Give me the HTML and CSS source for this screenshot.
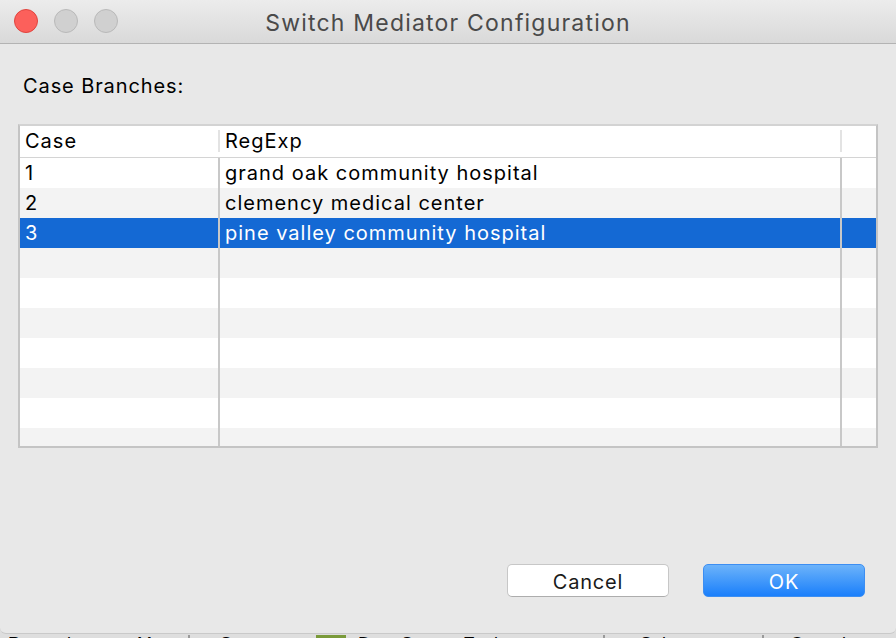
FILE: index.html
```html
<!DOCTYPE html>
<html>
<head>
<meta charset="utf-8">
<link rel="stylesheet" href="styles.css">
</head>
<body>
<div class="window">
  <div class="titlebar">
    <div class="lights">
      <span class="light close"></span>
      <span class="light"></span>
      <span class="light"></span>
    </div>
    <div class="title">Switch Mediator Configuration</div>
    <div></div>
  </div>
  <div class="content">
    <div class="label">Case Branches:</div>
    <div class="table">
      <div class="thead">
        <div class="hcell c1">Case</div>
        <div class="hcell c2">RegExp</div>
        <div class="hcell c3"></div>
      </div>
      <div class="tbody">
        <div class="row"><div class="cell c1">1</div><div class="cell c2">grand oak community hospital</div><div class="cell c3"></div></div>
        <div class="row alt"><div class="cell c1">2</div><div class="cell c2">clemency medical center</div><div class="cell c3"></div></div>
        <div class="row sel"><div class="cell c1">3</div><div class="cell c2">pine valley community hospital</div><div class="cell c3"></div></div>
        <div class="row alt"><div class="cell c1"></div><div class="cell c2"></div><div class="cell c3"></div></div>
        <div class="row"><div class="cell c1"></div><div class="cell c2"></div><div class="cell c3"></div></div>
        <div class="row alt"><div class="cell c1"></div><div class="cell c2"></div><div class="cell c3"></div></div>
        <div class="row"><div class="cell c1"></div><div class="cell c2"></div><div class="cell c3"></div></div>
        <div class="row alt"><div class="cell c1"></div><div class="cell c2"></div><div class="cell c3"></div></div>
        <div class="row"><div class="cell c1"></div><div class="cell c2"></div><div class="cell c3"></div></div>
        <div class="row alt"><div class="cell c1"></div><div class="cell c2"></div><div class="cell c3"></div></div>
      </div>
    </div>
    <div class="buttons">
      <button class="btn cancel">Cancel</button>
      <button class="btn ok">OK</button>
    </div>
  </div>
</div>
<div class="underlay">
  <span class="u1">Properties</span><span class="u2">M</span><span class="sep s1"></span>
  <span class="u3">Servers</span><span class="green"></span>
  <span class="u4">Data Source Explorer</span><span class="sep s2"></span>
  <span class="u5">Snippets</span><span class="sep s3"></span><span class="u6">Console</span>
</div>
</body>
</html>
```

FILE: styles.css
```css
* { box-sizing: border-box; }
html, body { margin: 0; padding: 0; }
body {
  width: 896px;
  height: 638px;
  overflow: hidden;
  background: #dedede;
  font-family: Inter, "Liberation Sans", sans-serif;
  color: #000;
}
.window {
  width: 896px;
  height: 634px;
  background: #e8e8e8;
  border-radius: 0 0 6px 6px;
  border-bottom: 1px solid #c9c9c9;
  display: flex;
  flex-direction: column;
  overflow: hidden;
}
.titlebar {
  height: 44px;
  flex: none;
  background: linear-gradient(#ececec, #d9d9d9);
  border-bottom: 1px solid #b3b3b3;
  display: grid;
  grid-template-columns: 1fr auto 1fr;
  align-items: center;
}
.lights {
  display: flex;
  gap: 16px;
  padding-left: 14px;
  padding-bottom: 1px;
}
.light {
  width: 24px;
  height: 24px;
  border-radius: 50%;
  background: #d0d0d0;
  border: 1px solid #b9b9b9;
}
.light.close {
  background: #fc605b;
  border-color: #e0443e;
}
.title {
  font-size: 23px;
  color: #4a4a4a;
  letter-spacing: 1.2px;
  padding-top: 3px;
}
.content {
  padding: 0 18px;
  display: flex;
  flex-direction: column;
}
.label {
  margin-top: 30px;
  height: 24px;
  line-height: 24px;
  font-size: 20px;
  letter-spacing: 0.9px;
  padding-left: 5px;
}
.table {
  margin-top: 26px;
  height: 324px;
  border: 2px solid #c4c4c4;
  border-top-color: #d3d3d3;
  background: #fff;
  overflow: hidden;
}
.thead {
  display: flex;
  height: 32px;
  border-bottom: 1px solid #d4d4d4;
  background: #fff;
}
.hcell {
  position: relative;
  font-size: 20px;
  letter-spacing: 1px;
  line-height: 31px;
  padding-left: 5px;
}
.hcell.c1::after, .hcell.c2::after {
  content: "";
  position: absolute;
  right: 0;
  top: 4px;
  width: 2px;
  height: 22px;
  background: #e3e3e3;
}
.c1 { width: 200px; flex: none; }
.c2 { width: 622px; flex: none; }
.c3 { flex: 1; }
.tbody { height: 288px; overflow: hidden; }
.row {
  display: flex;
  height: 30px;
  background: #fff;
}
.row.alt { background: #f3f3f3; }
.row.sel { background: #1469d4; color: #fff; }
.cell {
  font-size: 20px;
  letter-spacing: 1px;
  line-height: 30px;
  padding-left: 5px;
  white-space: nowrap;
}
.cell.c1, .cell.c2 { border-right: 2px solid #c8c8c8; }
.buttons {
  margin-top: 116px;
  display: flex;
  justify-content: flex-end;
  gap: 34px;
  padding-right: 13px;
}
.btn {
  width: 162px;
  height: 33px;
  border-radius: 5px;
  font-family: Inter, "Liberation Sans", sans-serif;
  font-size: 20px;
  letter-spacing: 0.8px;
  padding: 2px 0 0;
}
.btn.cancel {
  background: #fff;
  border: 1px solid #c7c7c7;
  border-bottom-color: #adadad;
  color: #1a1a1a;
}
.btn.ok {
  background: linear-gradient(#6cb3fa, #1a7ffb);
  border: 1px solid #3c8ef2;
  color: #fff;
}
.underlay {
  position: relative;
  height: 4px;
  overflow: hidden;
  font-family: "Liberation Sans", sans-serif;
  font-size: 18px;
  line-height: 18px;
}
.underlay span { position: absolute; top: 1px; }
.u1 { left: 8px; }
.u2 { left: 137px; }
.u3 { left: 220px; }
.u4 { left: 358px; }
.u5 { left: 640px; }
.u6 { left: 790px; }
.sep { width: 2px; height: 4px; background: #9a9a9a; }
.s1 { left: 188px; }
.s2 { left: 603px; }
.s3 { left: 762px; }
.green { left: 316px; width: 30px; height: 4px; background: #7a9a3a; }
```
